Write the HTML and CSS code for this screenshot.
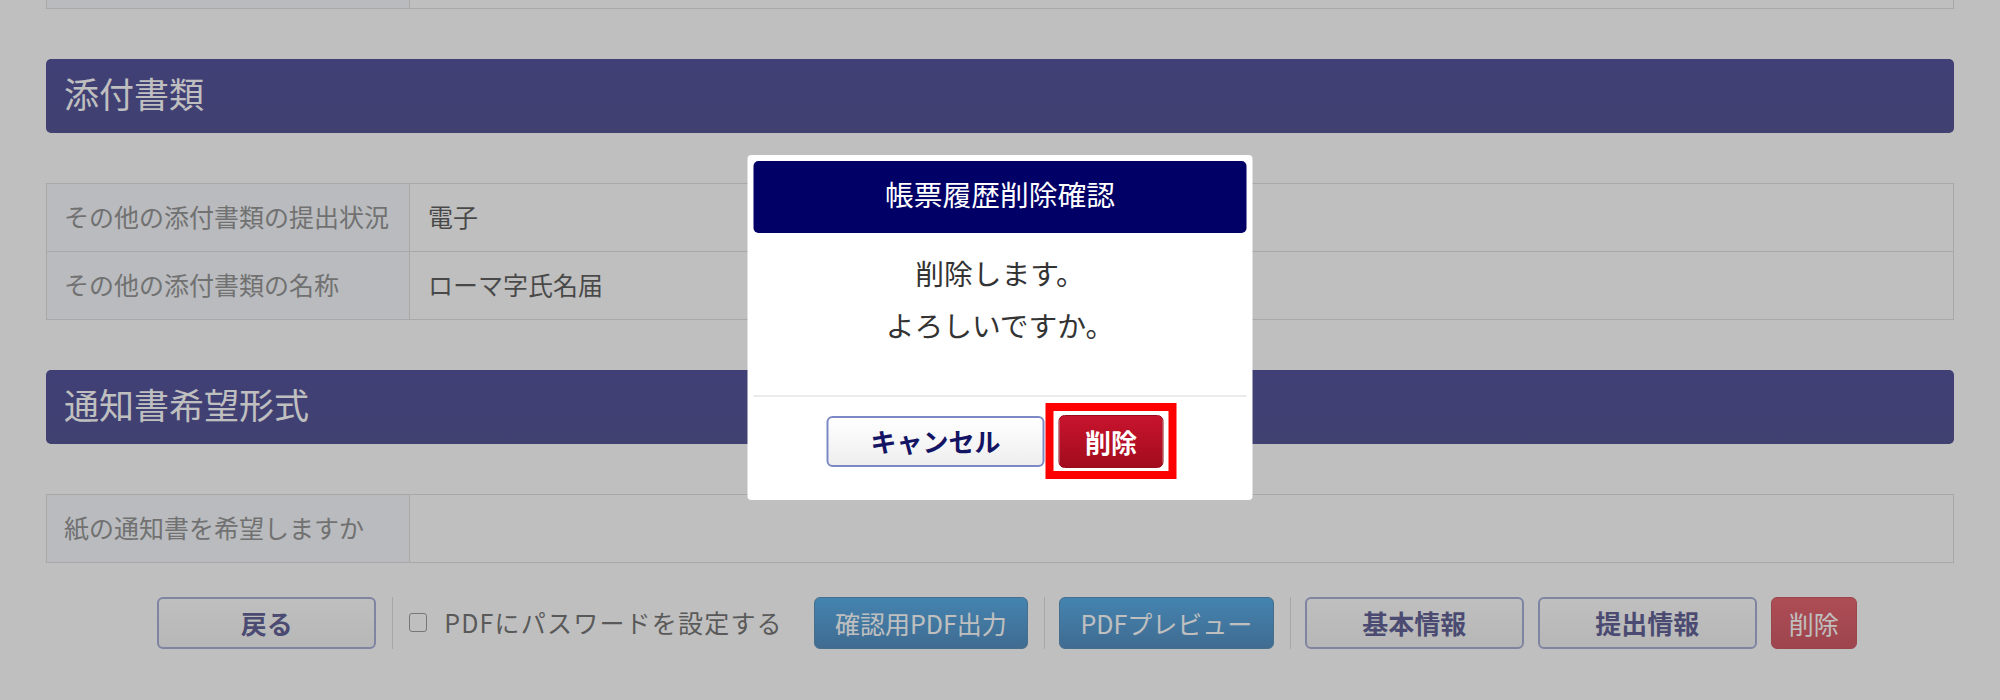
FILE: index.html
```html
<!DOCTYPE html>
<html lang="ja">
<head>
<meta charset="utf-8">
<title>帳票履歴削除確認</title>
<link rel="stylesheet" href="styles.css">
</head>
<body>
<main class="page">
  <div class="stack">
    <div class="info-grid">
      <div class="info-label"></div>
      <div class="info-value"></div>
    </div>

    <h2 class="section-title">添付書類</h2>
    <div class="info-grid">
      <div class="info-label">その他の添付書類の提出状況</div>
      <div class="info-value">電子</div>
      <div class="info-label">その他の添付書類の名称</div>
      <div class="info-value">ローマ字氏名届</div>
    </div>

    <h2 class="section-title">通知書希望形式</h2>
    <div class="info-grid">
      <div class="info-label">紙の通知書を希望しますか</div>
      <div class="info-value"></div>
    </div>
  </div>

  <div class="action-bar">
    <button class="btn btn-outline">戻る</button>
    <span class="divider"></span>
    <label class="check"><input type="checkbox" class="check-box"><span class="check-text">PDFにパスワードを設定する</span></label>
    <button class="btn btn-primary btn-w214">確認用PDF出力</button>
    <span class="divider"></span>
    <button class="btn btn-primary btn-w215">PDFプレビュー</button>
    <span class="divider"></span>
    <button class="btn btn-outline">基本情報</button>
    <button class="btn btn-outline">提出情報</button>
    <button class="btn btn-danger">削除</button>
  </div>
</main>

<div class="overlay"></div>

<div class="modal" role="dialog" aria-labelledby="modal-title">
  <div class="modal-header">
    <h3 class="modal-title" id="modal-title">帳票履歴削除確認</h3>
  </div>
  <div class="modal-body">
    <p>削除します。</p>
    <p>よろしいですか。</p>
  </div>
  <div class="modal-footer">
    <button class="btn btn-outline">キャンセル</button>
    <span class="mark"><button class="btn btn-delete">削除</button></span>
  </div>
</div>
</body>
</html>
```

FILE: styles.css
```css
* {
  box-sizing: border-box;
}

html,
body {
  margin: 0;
  padding: 0;
  background: #ffffff;
  font-family: "Noto Sans CJK JP", "Noto Sans", sans-serif;
  color: #333333;
}

body {
  width: 2000px;
  height: 700px;
  overflow: hidden;
}

.page {
  display: flex;
  flex-direction: column;
  padding: 0 46px;
  margin-top: -60px;
}

.stack {
  display: flex;
  flex-direction: column;
  gap: 50px;
}

/* ---------- section heading ---------- */
.section-title {
  margin: 0;
  height: 74px;
  padding: 0 0 7px 18px;
  line-height: 67px;
  font-size: 35px;
  font-weight: normal;
  color: #ffffff;
  background: linear-gradient(#00006e, #000062);
  border-radius: 5px;
}

/* ---------- info grid ---------- */
.info-grid {
  display: grid;
  grid-template-columns: 363px 1fr;
  border-top: 1px solid #d0d0d0;
  border-left: 1px solid #d0d0d0;
}

.info-label,
.info-value {
  height: 68px;
  display: flex;
  align-items: center;
  border-right: 1px solid #d0d0d0;
  border-bottom: 1px solid #d0d0d0;
  font-size: 25px;
  line-height: 1.2;
  padding: 0 17px 3px;
}

.info-label {
  background: #f2f7fd;
  color: #626262;
}

.info-value {
  background: #ffffff;
  color: #111111;
  padding-left: 18px;
}

/* ---------- action bar ---------- */
.action-bar {
  margin-top: 34px;
  display: flex;
  justify-content: center;
  align-items: stretch;
  gap: 14px;
  padding-left: 14px;
}

.divider {
  width: 1px;
  background: #d0d0d0;
  margin-left: 2px;
}

.check {
  display: flex;
  align-items: center;
  margin: 0 17px 0 2px;
  font-size: 25px;
  color: #333333;
  padding-bottom: 2px;
}

.check-text {
  letter-spacing: 1.2px;
}

.check-box {
  appearance: none;
  -webkit-appearance: none;
  width: 18px;
  height: 19px;
  margin: 0 17px 0 0;
  border: 1.5px solid #6e6e6e;
  border-radius: 3px;
  background: #ffffff;
}

/* ---------- buttons ---------- */
.btn {
  height: 52px;
  font-family: "Noto Sans CJK JP", "Noto Sans", sans-serif;
  border-radius: 6px;
  padding: 0 17px;
  cursor: pointer;
  line-height: 1;
}

.btn-outline {
  width: 219px;
  font-size: 26px;
  font-weight: bold;
  color: #141464;
  border: 2px solid #7d89c5;
  background: linear-gradient(#ffffff, #eeeeee);
}

.btn-primary {
  font-size: 25px;
  color: #ffffff;
  border: 1px solid #0d5d9a;
  background: linear-gradient(#0888e0, #0057a2);
}

.btn-w214 {
  width: 214px;
}

.btn-w215 {
  width: 215px;
}

.btn-danger {
  font-size: 25px;
  color: #ffffff;
  border: 1px solid #b00a18;
  background: linear-gradient(#dc1a2c, #bb0a1a);
}

/* ---------- overlay + modal ---------- */
.overlay {
  position: fixed;
  inset: 0;
  background: rgba(127, 127, 127, 0.5);
  z-index: 10;
}

.modal {
  position: fixed;
  top: 155px;
  left: 50%;
  transform: translateX(-50%);
  width: 505px;
  padding: 6px;
  background: #ffffff;
  border-radius: 4px;
  z-index: 20;
}

.modal-header {
  height: 72px;
  background: #000066;
  border-radius: 5px;
  display: flex;
  align-items: center;
  justify-content: center;
  padding-bottom: 5px;
}

.modal-title {
  margin: 0;
  font-size: 28.75px;
  font-weight: normal;
  color: #ffffff;
  line-height: 1.2;
}

.modal-body {
  padding: 14px 0 44px;
  text-align: center;
}

.modal-body p {
  margin: 0;
  font-size: 28.75px;
  line-height: 52px;
  color: #333333;
}

.modal-footer {
  border-top: 2px solid #ebebeb;
  display: flex;
  justify-content: center;
  align-items: center;
  gap: 1px;
  padding: 6px 0 15px 3px;
}

.modal-footer .btn-outline {
  width: 218px;
  height: 51px;
}

.mark {
  display: inline-flex;
  border: 8px solid #ff0000;
  padding: 4px 5px 3px 5px;
  background: #ffffff;
}

.btn-delete {
  width: 105px;
  height: 53px;
  font-size: 26px;
  font-weight: bold;
  color: #ffffff;
  border: 1px solid #9a0a18;
  background: linear-gradient(#c8142e, #a20c1c);
}
```
